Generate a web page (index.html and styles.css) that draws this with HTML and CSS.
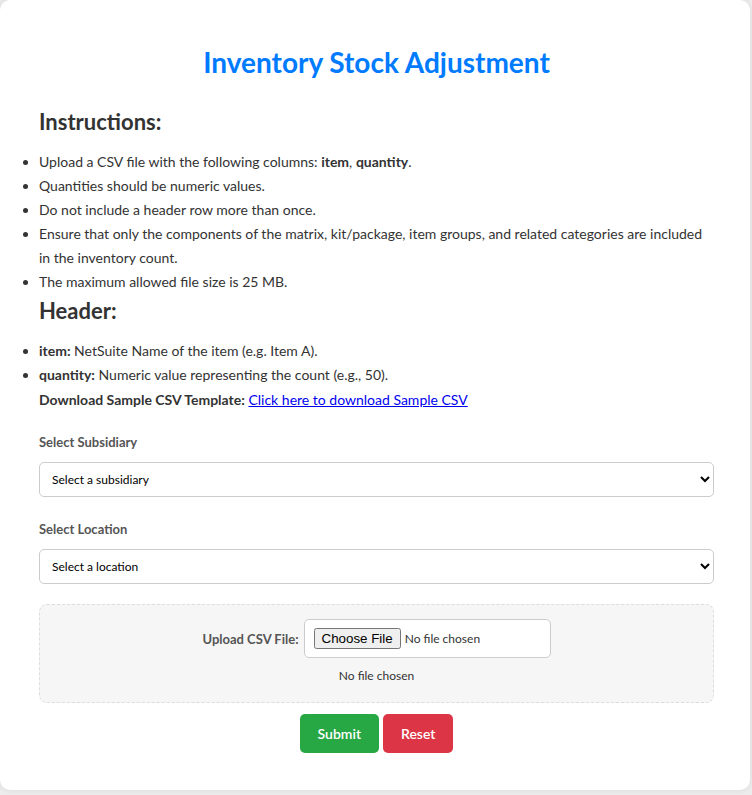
FILE: index.html
```html
<!DOCTYPE html>
<html lang="en">
<head>
<meta charset="utf-8">
<title>Inventory Stock Adjustment</title>
<link rel="stylesheet" href="styles.css">
</head>
<body>
<div class="card">
  <h1 class="title">Inventory Stock Adjustment</h1>

  <h2 class="section-title">Instructions:</h2>
  <ul class="list">
    <li>Upload a CSV file with the following columns: <strong>item</strong>, <strong>quantity</strong>.</li>
    <li>Quantities should be numeric values.</li>
    <li>Do not include a header row more than once.</li>
    <li>Ensure that only the components of the matrix, kit/package, item groups, and related categories are included in the inventory count.</li>
    <li>The maximum allowed file size is 25 MB.</li>
  </ul>

  <h2 class="section-title section-title--second">Header:</h2>
  <ul class="list">
    <li><strong>item:</strong> NetSuite Name of the item (e.g. Item A).</li>
    <li><strong>quantity:</strong> Numeric value representing the count (e.g., 50).</li>
  </ul>
  <p class="download"><strong>Download Sample CSV Template:</strong> <a href="#">Click here to download Sample CSV</a></p>

  <form class="form">
    <div class="field">
      <label class="field-label" for="subsidiary">Select Subsidiary</label>
      <select id="subsidiary" class="select">
        <option>Select a subsidiary</option>
      </select>
    </div>
    <div class="field">
      <label class="field-label" for="location">Select Location</label>
      <select id="location" class="select">
        <option>Select a location</option>
      </select>
    </div>

    <div class="upload">
      <div class="upload-row">
        <label class="upload-label" for="csv">Upload CSV File:</label>
        <div class="file-wrap">
          <input id="csv" class="file-input" type="file" accept=".csv">
        </div>
      </div>
      <div class="file-name">No file chosen</div>
    </div>

    <div class="actions">
      <button type="button" class="btn btn--submit">Submit</button>
      <button type="button" class="btn btn--reset">Reset</button>
    </div>
  </form>
</div>
</body>
</html>
```

FILE: styles.css
```css
html, body {
  margin: 0;
  padding: 0;
}

body {
  background: #ececec;
  font-family: "Lato", "Open Sans", sans-serif;
  color: #333;
  height: 795px;
}

.card {
  box-sizing: border-box;
  width: 750px;
  background: #fff;
  border-radius: 10px;
  box-shadow: 0 0 6px rgba(0, 0, 0, 0.08);
  padding: 45px 36px 37px 39px;
}

.title {
  margin: 0;
  text-align: center;
  color: #007bff;
  font-size: 28px;
  line-height: 34px;
  font-weight: 700;
}

.section-title {
  margin: 29px 0 14px;
  font-size: 22px;
  line-height: 28px;
  font-weight: 700;
  color: #333;
}

.section-title--second {
  margin-top: 3px;
}

.list {
  margin: 0;
  padding: 0;
  list-style: disc outside;
  font-size: 14px;
  line-height: 24px;
}

.list strong {
  font-weight: 700;
}

.download {
  margin: 1px 0 0;
  font-size: 14px;
  line-height: 24px;
}

.download a {
  color: #0000ee;
  text-decoration: underline;
}

.form {
  margin-top: 21px;
}

.field {
  display: flex;
  flex-direction: column;
  gap: 11px;
  margin-bottom: 23px;
}

.field:nth-child(2) {
  margin-bottom: 20px;
}

.field-label {
  font-size: 13px;
  line-height: 18px;
  font-weight: 700;
  color: #555;
}

.select {
  box-sizing: border-box;
  width: 100%;
  height: 35px;
  padding: 0 8px;
  border: 1px solid #ccc;
  border-radius: 5px;
  background: #fff;
  font-family: "Lato", sans-serif;
  font-size: 12px;
  color: #000;
}

.upload {
  box-sizing: border-box;
  height: 99px;
  background: #f6f6f6;
  border: 1px dashed #ddd;
  border-radius: 8px;
  padding: 14px 10px 0;
  display: flex;
  flex-direction: column;
  align-items: center;
}

.upload-row {
  display: flex;
  align-items: center;
  gap: 5px;
}

.upload-label {
  font-size: 13px;
  font-weight: 700;
  color: #555;
}

.file-wrap {
  box-sizing: border-box;
  width: 247px;
  height: 39px;
  padding: 0 9px;
  display: flex;
  align-items: center;
  background: #fff;
  border: 1px solid #ccc;
  border-radius: 5px;
}

.file-input {
  font-family: "Lato", sans-serif;
  font-size: 12px;
  color: #333;
  width: 227px;
}

.file-input::file-selector-button {
  font-family: "Liberation Sans", Arial, sans-serif;
  font-size: 13.33px;
}

.file-name {
  margin-top: 9px;
  font-size: 12px;
  line-height: 18px;
  color: #333;
}

.actions {
  margin-top: 11px;
  display: flex;
  justify-content: center;
  gap: 4px;
}

.btn {
  height: 39px;
  padding: 0 18px;
  border: none;
  border-radius: 5px;
  color: #fff;
  font-family: "Lato", sans-serif;
  font-size: 14px;
  font-weight: 600;
  cursor: pointer;
}

.btn--submit {
  background: #28a745;
}

.btn--reset {
  background: #dc3545;
}
```
